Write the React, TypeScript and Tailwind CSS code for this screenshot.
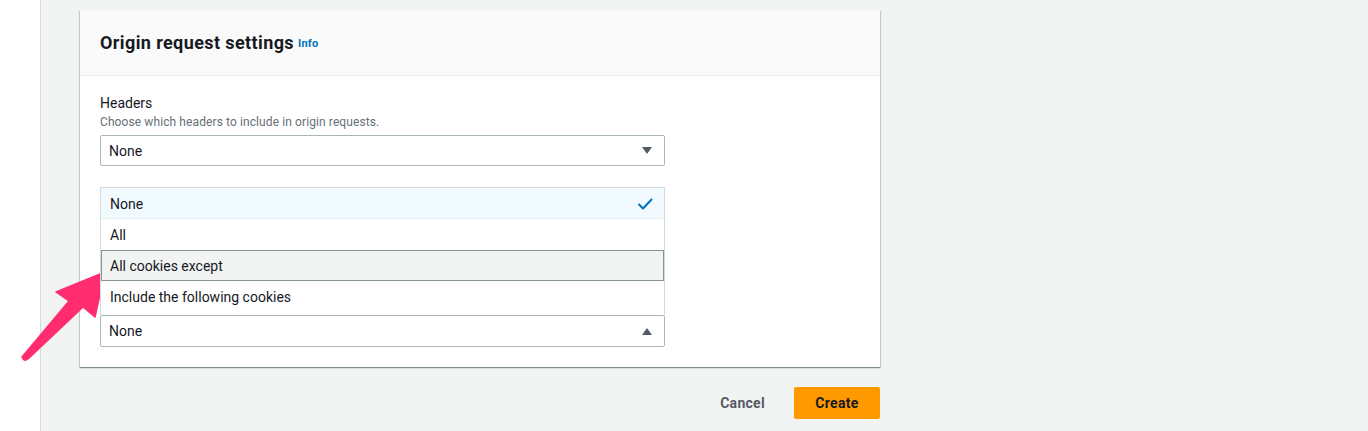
import React from 'react';

const font = { fontFamily: 'Roboto, "Noto Sans", Arial, sans-serif' };

const Caret: React.FC<{ up?: boolean }> = ({ up }) => (
  <svg width="12" height="8" viewBox="0 0 12 8" className="shrink-0">
    {up ? <path d="M1 8 L6 1 L11 8 Z" fill="#545b64" /> : <path d="M1 0 L11 0 L6 7 Z" fill="#545b64" />}
  </svg>
);

const Select: React.FC<{ value: string; open?: boolean; className?: string }> = ({ value, open, className }) => (
  <div
    className={`flex w-[565px] items-center justify-between rounded-[2px] border border-[#aab7b8] bg-white pl-2 pr-[11px] text-sm text-[#16191f] ${className ?? 'h-[31px]'}`}
  >
    <span>{value}</span>
    <Caret up={open} />
  </div>
);

const options = ['None', 'All', 'All cookies except', 'Include the following cookies'];

const Dropdown: React.FC = () => (
  <div className="absolute bottom-full left-0 z-10 w-[565px] border border-b-0 border-[#d5dbdb] bg-white pb-[3px]">
    {options.map((o, i) => (
      <div
        key={o}
        className={`flex h-[31px] items-center justify-between border px-2 text-sm text-[#16191f] ${
          i === 0
            ? 'border-transparent border-b-[#eaeded] bg-[#f1faff]'
            : i === 2
            ? 'border-[#879596] bg-[#f2f3f3]'
            : 'border-transparent'
        }`}
      >
        <span>{o}</span>
        {i === 0 && (
          <svg width="16" height="16" viewBox="0 0 16 16" className="mr-[2px]">
            <path d="M2 8.5 L6 12.5 L14.5 3.5" fill="none" stroke="#0073bb" strokeWidth="2" strokeLinecap="round" strokeLinejoin="round" />
          </svg>
        )}
      </div>
    ))}
  </div>
);

const App: React.FC = () => {
  return (
    <div className="relative flex h-[431px] w-full overflow-hidden" style={font}>
      <div className="w-[41px] shrink-0 border-r border-[#d5dbdb] bg-white" />
      <div className="flex-1 bg-[#f2f3f3] pl-[39px] pt-[10px]">
        <div className="w-[800px] bg-white shadow-[0_1px_1px_0_rgba(0,28,36,0.3),1px_1px_1px_0_rgba(0,28,36,0.15),-1px_1px_1px_0_rgba(0,28,36,0.15)]">
          <div className="flex h-[66px] items-center border-b border-[#eaeded] bg-[#fafafa] px-5">
            <h2 className="text-lg font-bold tracking-[0.4px] text-[#16191f]">Origin request settings</h2>
            <span className="ml-[4px] mt-[3px] text-[11px] font-bold tracking-[0.2px] text-[#0073bb]">Info</span>
          </div>
          <div className="px-5 pb-5 pt-4">
            <div className="text-sm leading-[22px] text-[#16191f]">Headers</div>
            <div className="text-xs leading-4 tracking-[0.1px] text-[#687078]">Choose which headers to include in origin requests.</div>
            <Select className="mt-[5px] h-[31px]" value="None" />
            {/* cookies select, list opened above it */}
            <div className="relative mt-[149px]">
              <Dropdown />
              <Select className="h-[32px]" value="None" open />
            </div>
          </div>
        </div>
        <div className="mt-[20px] flex w-[800px] items-center justify-end">
          <button className="h-8 px-5 text-sm font-bold tracking-[0.3px] text-[#545b64]">Cancel</button>
          <button className="ml-[9px] h-8 w-[86px] rounded-[2px] bg-[#ff9900] text-sm font-bold tracking-[0.3px] text-[#16191f]">Create</button>
        </div>
      </div>
      <svg className="pointer-events-none absolute left-0 top-0" width="140" height="431" viewBox="0 0 140 431">
        <path
          d="M105 272 L95 317 L83 307 L28 359 Q24 362 22 357 L69 301 L56 292 Z"
          fill="#ff2d6f"
          stroke="#ff2d6f"
          strokeWidth="1.5"
          strokeLinejoin="round"
        />
      </svg>
    </div>
  );
};

export default App;
